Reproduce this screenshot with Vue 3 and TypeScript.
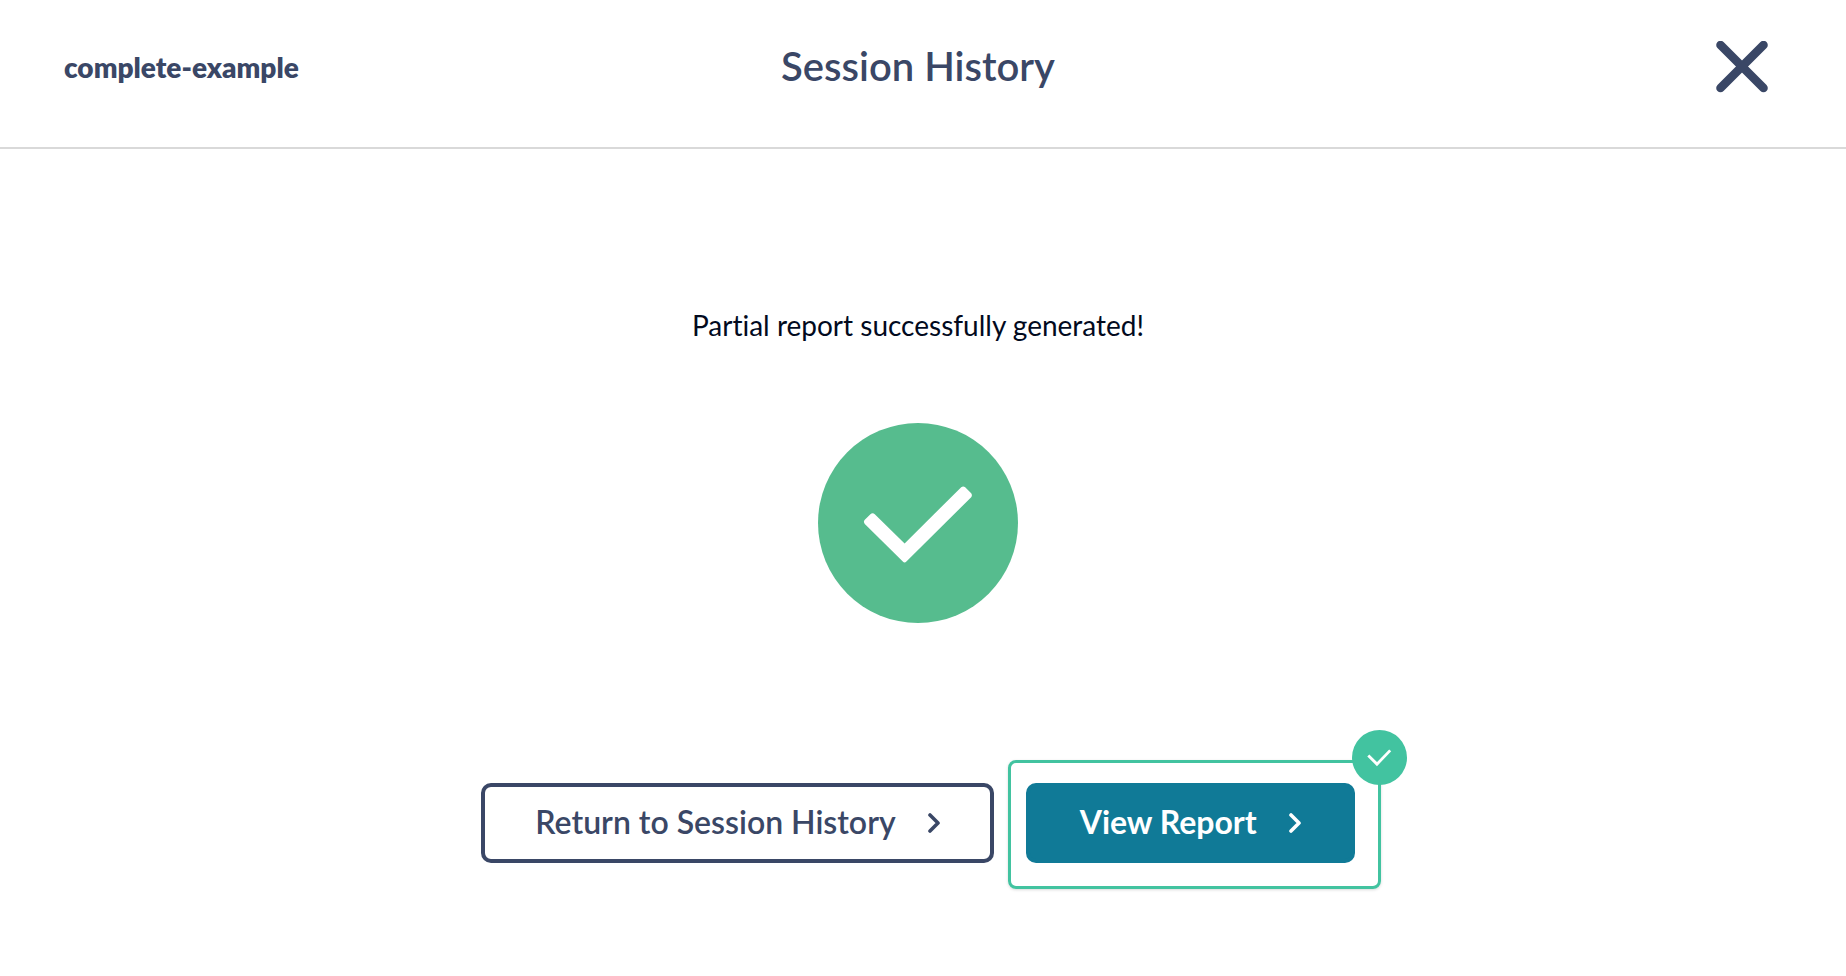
<script setup lang="ts">
import { ref } from 'vue'

const projectName = ref<string>('complete-example')
const title = ref<string>('Session History')
const message = ref<string>('Partial report successfully generated!')
</script>

<template>
  <div class="page">
    <header class="header">
      <span class="project">{{ projectName }}</span>
      <h1 class="title">{{ title }}</h1>
      <button class="close" type="button" aria-label="Close">
        <svg viewBox="0 0 52 52" aria-hidden="true">
          <path d="M4.5 4L47.5 47M47.5 4L4.5 47" />
        </svg>
      </button>
    </header>

    <main class="content">
      <p class="message">{{ message }}</p>

      <svg class="success" viewBox="0 0 200 200" aria-hidden="true">
        <circle cx="100" cy="100" r="100" fill="#56bc8e" />
        <path
          d="M46.8 96.8L52.4 91.2Q54.6 89.4 56.8 91.2L86.6 120.4L143.2 64.2Q145.2 62.6 147.2 64.2L153.2 70.2Q154.6 72.2 153.2 74.2L88.4 138.6Q86.6 140.6 84.8 138.6L46.8 101Q45 98.8 46.8 96.8Z"
          fill="#fff"
        />
      </svg>

      <div class="actions">
        <button class="button outline" type="button">
          <span class="label">Return to Session History</span>
          <svg class="chevron" viewBox="0 0 12 20" aria-hidden="true">
            <path d="M2 2L10 10L2 18" />
          </svg>
        </button>
        <div class="highlighted">
          <button class="button primary" type="button">
            <span class="label">View Report</span>
            <svg class="chevron" viewBox="0 0 12 20" aria-hidden="true">
              <path d="M2 2L10 10L2 18" />
            </svg>
          </button>
          <div class="frame">
            <svg class="badge" viewBox="0 0 54 54" aria-hidden="true">
              <circle cx="27" cy="27" r="27" fill="#42c3a0" />
              <path d="M16 25L24.5 33.5L37.5 20" fill="none" stroke="#fff" stroke-width="2.8" />
            </svg>
          </div>
        </div>
      </div>
    </main>
  </div>
</template>

<style>
body {
  background: #fff;
}
</style>

<style scoped>
.page {
  box-sizing: border-box;
  font-family: Lato, "Open Sans", sans-serif;
  font-variant-ligatures: none;
  color: #3a4766;
}

.header {
  display: grid;
  grid-template-columns: 1fr auto 1fr;
  align-items: center;
  padding: 31px 74px 45px 64px;
  border-bottom: 2px solid #d9d9d9;
}

.project {
  font-size: 28px;
  line-height: 36px;
  font-weight: 800;
}

.title {
  margin: 0;
  font-size: 40px;
  line-height: 71px;
  font-weight: 600;
}

.close {
  justify-self: end;
  padding: 4px;
  border: 0;
  background: none;
  cursor: pointer;
}

.close svg {
  display: block;
  width: 52px;
  height: 52px;
  fill: none;
  stroke: #3a4766;
  stroke-width: 8.6;
  stroke-linecap: round;
}

.content {
  display: flex;
  flex-direction: column;
  align-items: center;
  padding: 156px 10px 88px 0;
}

.message {
  margin: 0;
  font-size: 28px;
  line-height: 40px;
  color: #020a1e;
}

.success {
  width: 200px;
  height: 200px;
  margin-top: 78px;
}

.actions {
  display: flex;
  gap: 32px;
  margin-top: 160px;
}

.button {
  display: flex;
  align-items: center;
  justify-content: center;
  gap: 32px;
  height: 80px;
  padding: 0 50px;
  border: 4px solid #3a4766;
  border-radius: 10px;
  background: #fff;
  color: #3a4766;
  font-family: inherit;
  font-size: 32px;
  font-weight: 600;
  font-variant-ligatures: none;
  white-space: nowrap;
  cursor: pointer;
}

.primary {
  border-color: #107a97;
  background: #107a97;
  color: #fff;
  font-weight: 700;
}

.label {
  padding-bottom: 3px;
}

.chevron {
  width: 12px;
  height: 20px;
  fill: none;
  stroke: currentColor;
  stroke-width: 3.6;
  stroke-linecap: round;
  stroke-linejoin: round;
}

.highlighted {
  position: relative;
}

.frame {
  position: absolute;
  inset: -23px -26px -26px -18px;
  border: 3px solid #42c3a0;
  border-radius: 8px;
  box-shadow: 0 1px 3px rgba(0, 0, 0, 0.15);
  pointer-events: none;
}

.badge {
  position: absolute;
  top: -33px;
  right: -29px;
  width: 55px;
  height: 55px;
}
</style>
